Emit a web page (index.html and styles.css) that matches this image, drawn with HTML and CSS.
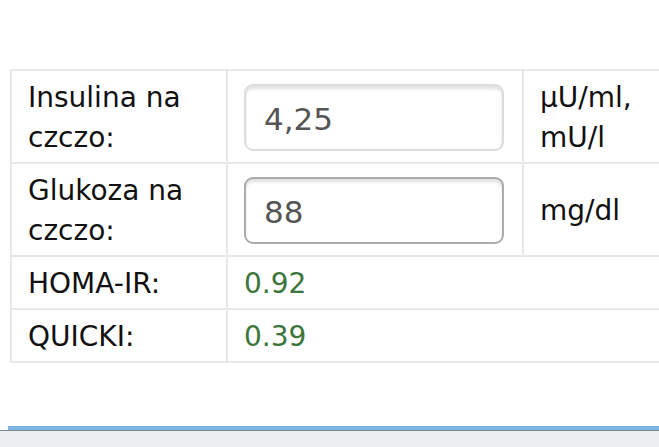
FILE: index.html
```html
<!DOCTYPE html>
<html lang="pl">
<head>
    <meta charset="UTF-8">
    <meta name="viewport" content="width=device-width, initial-scale=1.0">
    <title>HOMA-IR</title>
    <link rel="stylesheet" href="styles.css">
</head>
<body>
    <div class="page">
        <table class="calc">
            <tr>
                <td class="label">Insulina na czczo:</td>
                <td class="field"><input class="light" type="text" value="4,25"></td>
                <td class="unit">µU/ml,<br>mU/l</td>
            </tr>
            <tr>
                <td class="label">Glukoza na czczo:</td>
                <td class="field"><input type="text" value="88"></td>
                <td class="unit">mg/dl</td>
            </tr>
            <tr>
                <td class="label">HOMA-IR:</td>
                <td class="result" colspan="2">0.92</td>
            </tr>
            <tr>
                <td class="label">QUICKI:</td>
                <td class="result" colspan="2">0.39</td>
            </tr>
        </table>
    </div>

    <div class="bottom">
        <div class="progress"></div>
        <div class="toolbar"></div>
    </div>
</body>
</html>
```

FILE: styles.css
```css
* {
    box-sizing: border-box;
    margin: 0;
    padding: 0;
}

html, body {
    width: 659px;
    height: 447px;
    overflow: hidden;
}

body {
    font-family: "DejaVu Sans", Verdana, sans-serif;
    font-size: 28px;
    line-height: 40px;
    color: #111;
    background: #fff;
}

.page {
    padding: 69px 0 0 10px;
    height: 426px;
    overflow: hidden;
}

.calc {
    border-collapse: collapse;
    width: 760px;
}

.calc td {
    border: 2px solid #e8e8e8;
    padding: 7px 16px 4px;
    vertical-align: middle;
}

.calc .label {
    width: 216px;
}

.calc .field {
    width: 296px;
    padding-top: 6px;
    padding-bottom: 5px;
}

.calc .result {
    color: #3c763d;
}

input {
    display: block;
    width: 260px;
    height: 67px;
    padding: 4px 18px 0;
    font-family: "DejaVu Sans", Verdana, sans-serif;
    font-size: 31px;
    color: #555;
    border: 2px solid #ababab;
    border-radius: 9px;
    box-shadow: inset 0 3px 3px rgba(0, 0, 0, 0.12);
    background: #fff;
    outline: none;
}

input.light {
    border-color: #dcdcdc;
}

.bottom {
    height: 21px;
}

.progress {
    margin-left: 8px;
    height: 4px;
    background: #7eb4e1;
}

.toolbar {
    height: 17px;
    border-top: 1px solid #7d8a96;
    background: #eceef0;
}
```
